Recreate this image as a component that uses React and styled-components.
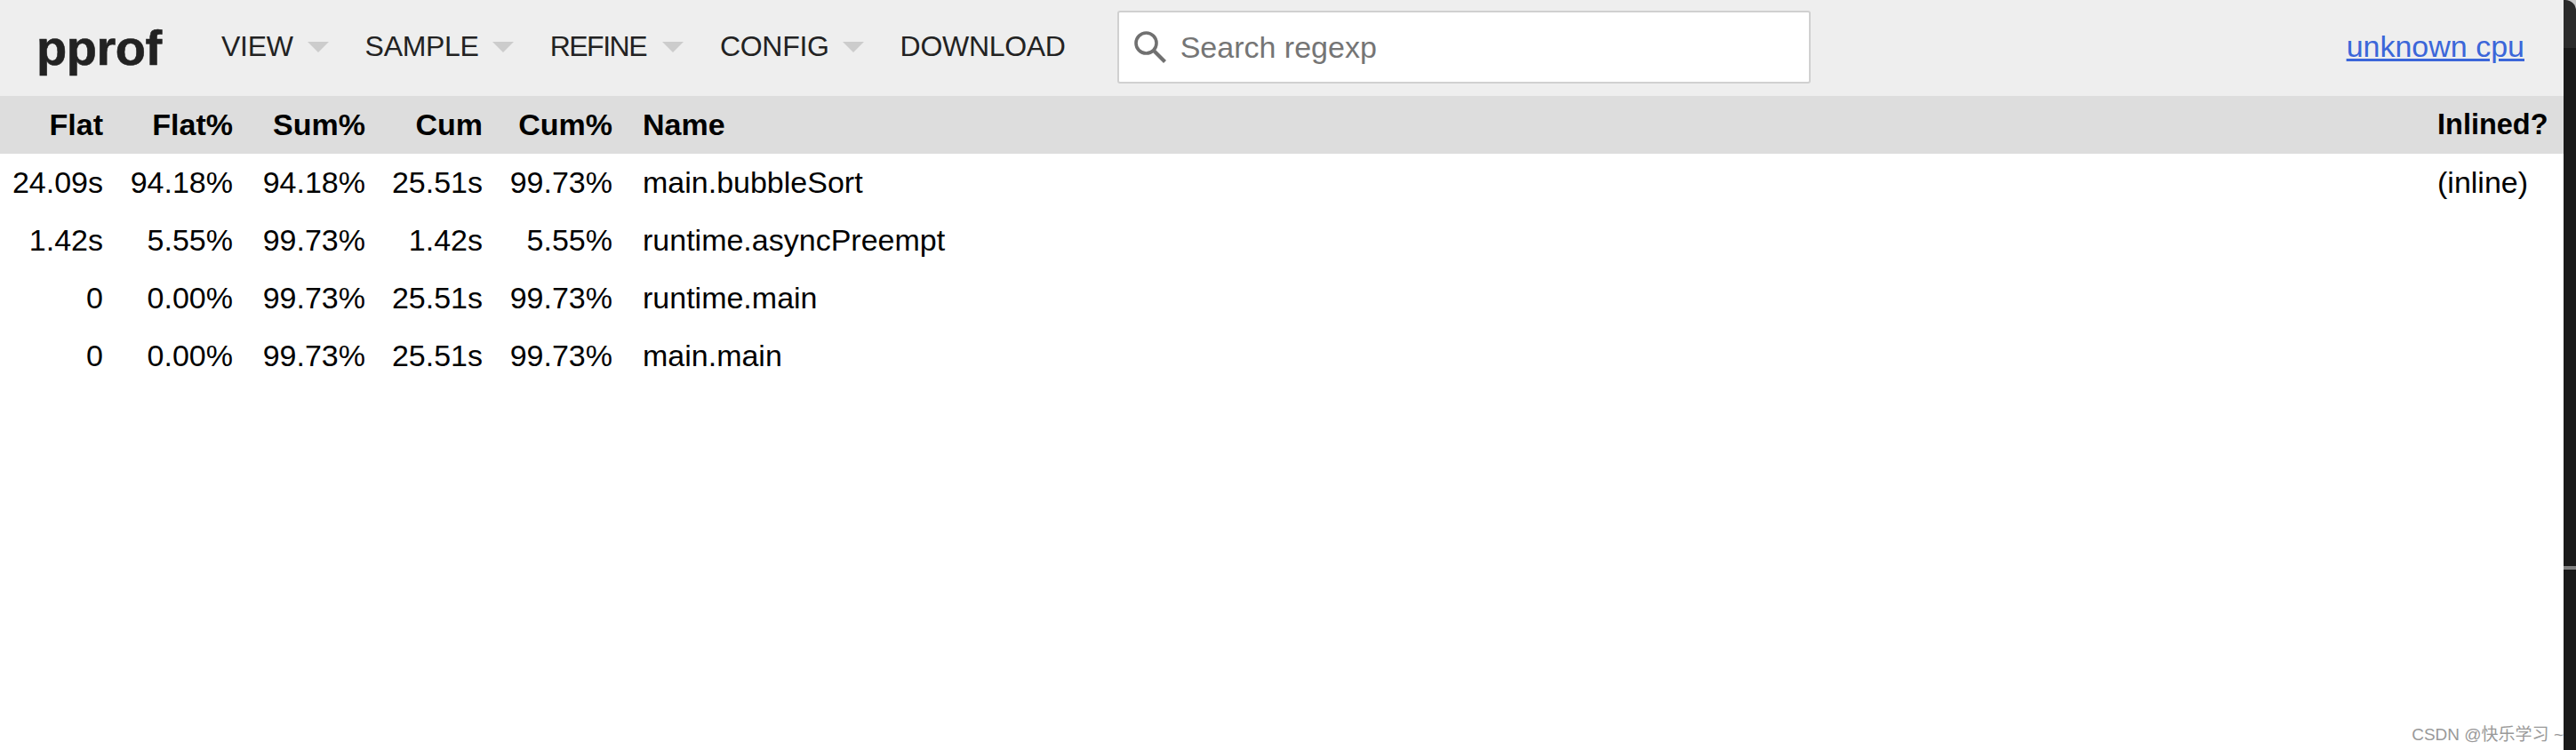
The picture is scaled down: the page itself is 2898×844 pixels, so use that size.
import React from 'react'
import styled, { createGlobalStyle } from 'styled-components'

const GlobalStyle = createGlobalStyle`
    html, body {
        margin: 0;
        padding: 0;
        background: #fff;
    }
    body {
        font-family: "Liberation Sans", Arial, sans-serif;
        color: #000;
    }
`

const menus = [
    { label: 'VIEW', arrow: true, gap: 16 },
    { label: 'SAMPLE', arrow: true, gap: 15 },
    { label: 'REFINE', arrow: true, gap: 18, tight: true },
    { label: 'CONFIG', arrow: true, gap: 15 },
    { label: 'DOWNLOAD', arrow: false },
]

const rows = [
    ['24.09s', '94.18%', '94.18%', '25.51s', '99.73%', 'main.bubbleSort', '(inline)'],
    ['1.42s', '5.55%', '99.73%', '1.42s', '5.55%', 'runtime.asyncPreempt', ''],
    ['0', '0.00%', '99.73%', '25.51s', '99.73%', 'runtime.main', ''],
    ['0', '0.00%', '99.73%', '25.51s', '99.73%', 'main.main', ''],
]

const heads = ['Flat', 'Flat%', 'Sum%', 'Cum', 'Cum%', 'Name', 'Inlined?']

const App = () => {
    return (<>
        <GlobalStyle />
        <Page>
            <Content>
                <TopBar>
                    <Logo>pprof</Logo>
                    <Menus>
                        {menus.map((m) => (
                            <MenuItem key={m.label} $tight={m.tight}>
                                {m.label}
                                {m.arrow && <Arrow $gap={m.gap} />}
                            </MenuItem>
                        ))}
                    </Menus>
                    <SearchBox>
                        <SearchIcon viewBox="0 0 36 36">
                            <circle cx="13.5" cy="13.5" r="11.5" fill="none" stroke="#707070" strokeWidth="3.6" />
                            <path d="M21.5 21.5 L34.5 34.5" stroke="#707070" strokeWidth="4.2" fill="none" />
                        </SearchIcon>
                        <SearchInput placeholder="Search regexp" />
                    </SearchBox>
                    <CpuLink href="#">unknown cpu</CpuLink>
                </TopBar>
                <HeadRow>
                    {heads.map((h, i) => <HeadCell key={h} $col={i}>{h}</HeadCell>)}
                </HeadRow>
                {rows.map((r, n) => (
                    <Row key={n}>
                        {r.map((c, i) => <Cell key={i} $col={i}>{c}</Cell>)}
                    </Row>
                ))}
                <Watermark>CSDN @快乐学习 ~</Watermark>
            </Content>
            <DarkEdge>
                <Corner />
                <Tick />
            </DarkEdge>
        </Page>
    </>)
}
export default App

const Page = styled.div`
    display: flex;
    width: 2898px;
    height: 844px;
    overflow: hidden;
`
const Content = styled.div`
    position: relative;
    flex: 1;
    min-width: 0;
    background: #fff;
`
const TopBar = styled.div`
    display: flex;
    align-items: center;
    height: 108px;
    padding: 0 44px 0 41px;
    box-sizing: border-box;
    background: #eee;
`
const Logo = styled.div`
    width: 208px;
    font-size: 56px;
    font-weight: bold;
    letter-spacing: -0.5px;
    -webkit-text-stroke: 0.6px #222;
    color: #222;
    margin-top: -2px;
`
const Menus = styled.div`
    display: flex;
    align-items: center;
    margin-top: -3px;
`
const MenuItem = styled.div`
    display: flex;
    align-items: center;
    font-size: 32px;
    letter-spacing: ${(p) => (p.$tight ? '-1.5px' : '-0.3px')};
    color: #222;
    margin-right: 41px;
    &:last-child {
        margin-right: 58px;
    }
`
const Arrow = styled.span`
    width: 0;
    height: 0;
    margin-left: ${(p) => p.$gap}px;
    border-left: 12px solid transparent;
    border-right: 12px solid transparent;
    border-top: 12px solid #ccc;
`
const SearchBox = styled.div`
    display: flex;
    align-items: center;
    box-sizing: border-box;
    flex: none;
    width: 780px;
    height: 82px;
    margin-top: -2px;
    padding-left: 17px;
    background: #fff;
    border: 2px solid #d0d0d0;
    border-radius: 3px;
`
const SearchIcon = styled.svg`
    width: 36px;
    height: 36px;
    flex: none;
`
const SearchInput = styled.input`
    flex: 1;
    margin-left: 16px;
    padding: 0;
    border: 0;
    outline: 0;
    background: transparent;
    font-family: "Liberation Sans", Arial, sans-serif;
    font-size: 34px;
    color: #222;
    &::placeholder {
        color: #757575;
        opacity: 1;
    }
`
const CpuLink = styled.a`
    margin-left: auto;
    margin-top: -3px;
    font-size: 34px;
    color: #3b66d9;
    text-decoration: underline;
`
const Row = styled.div`
    display: grid;
    grid-template-columns: 116px 146px 149px 132px 146px 1fr 142px;
    align-items: center;
    height: 65px;
    font-size: 34px;
`
const HeadRow = styled(Row)`
    background: #ddd;
    font-weight: bold;
`
const Cell = styled.div`
    text-align: ${(p) => (p.$col < 5 ? 'right' : 'left')};
    padding-left: ${(p) => (p.$col === 5 ? '34px' : '0')};
    white-space: nowrap;
`
const HeadCell = styled(Cell)`
    font-size: ${(p) => (p.$col === 6 ? '32.5px' : '34px')};
`
const Watermark = styled.div`
    position: absolute;
    right: 0;
    bottom: 6px;
    font-family: "Liberation Sans", "Noto Sans CJK SC", sans-serif;
    font-size: 19px;
    color: #999;
    white-space: nowrap;
`
const DarkEdge = styled.div`
    position: relative;
    width: 14px;
    flex: none;
    background: #1a1a1a;
`
const Corner = styled.div`
    height: 54px;
    background: #c8c8c8;
    &::before {
        content: "";
        display: block;
        height: 100%;
        background: #2b2b2b;
        border-top-right-radius: 12px;
    }
`
const Tick = styled.div`
    position: absolute;
    left: 0;
    top: 637px;
    width: 14px;
    height: 4px;
    background: #808080;
`
